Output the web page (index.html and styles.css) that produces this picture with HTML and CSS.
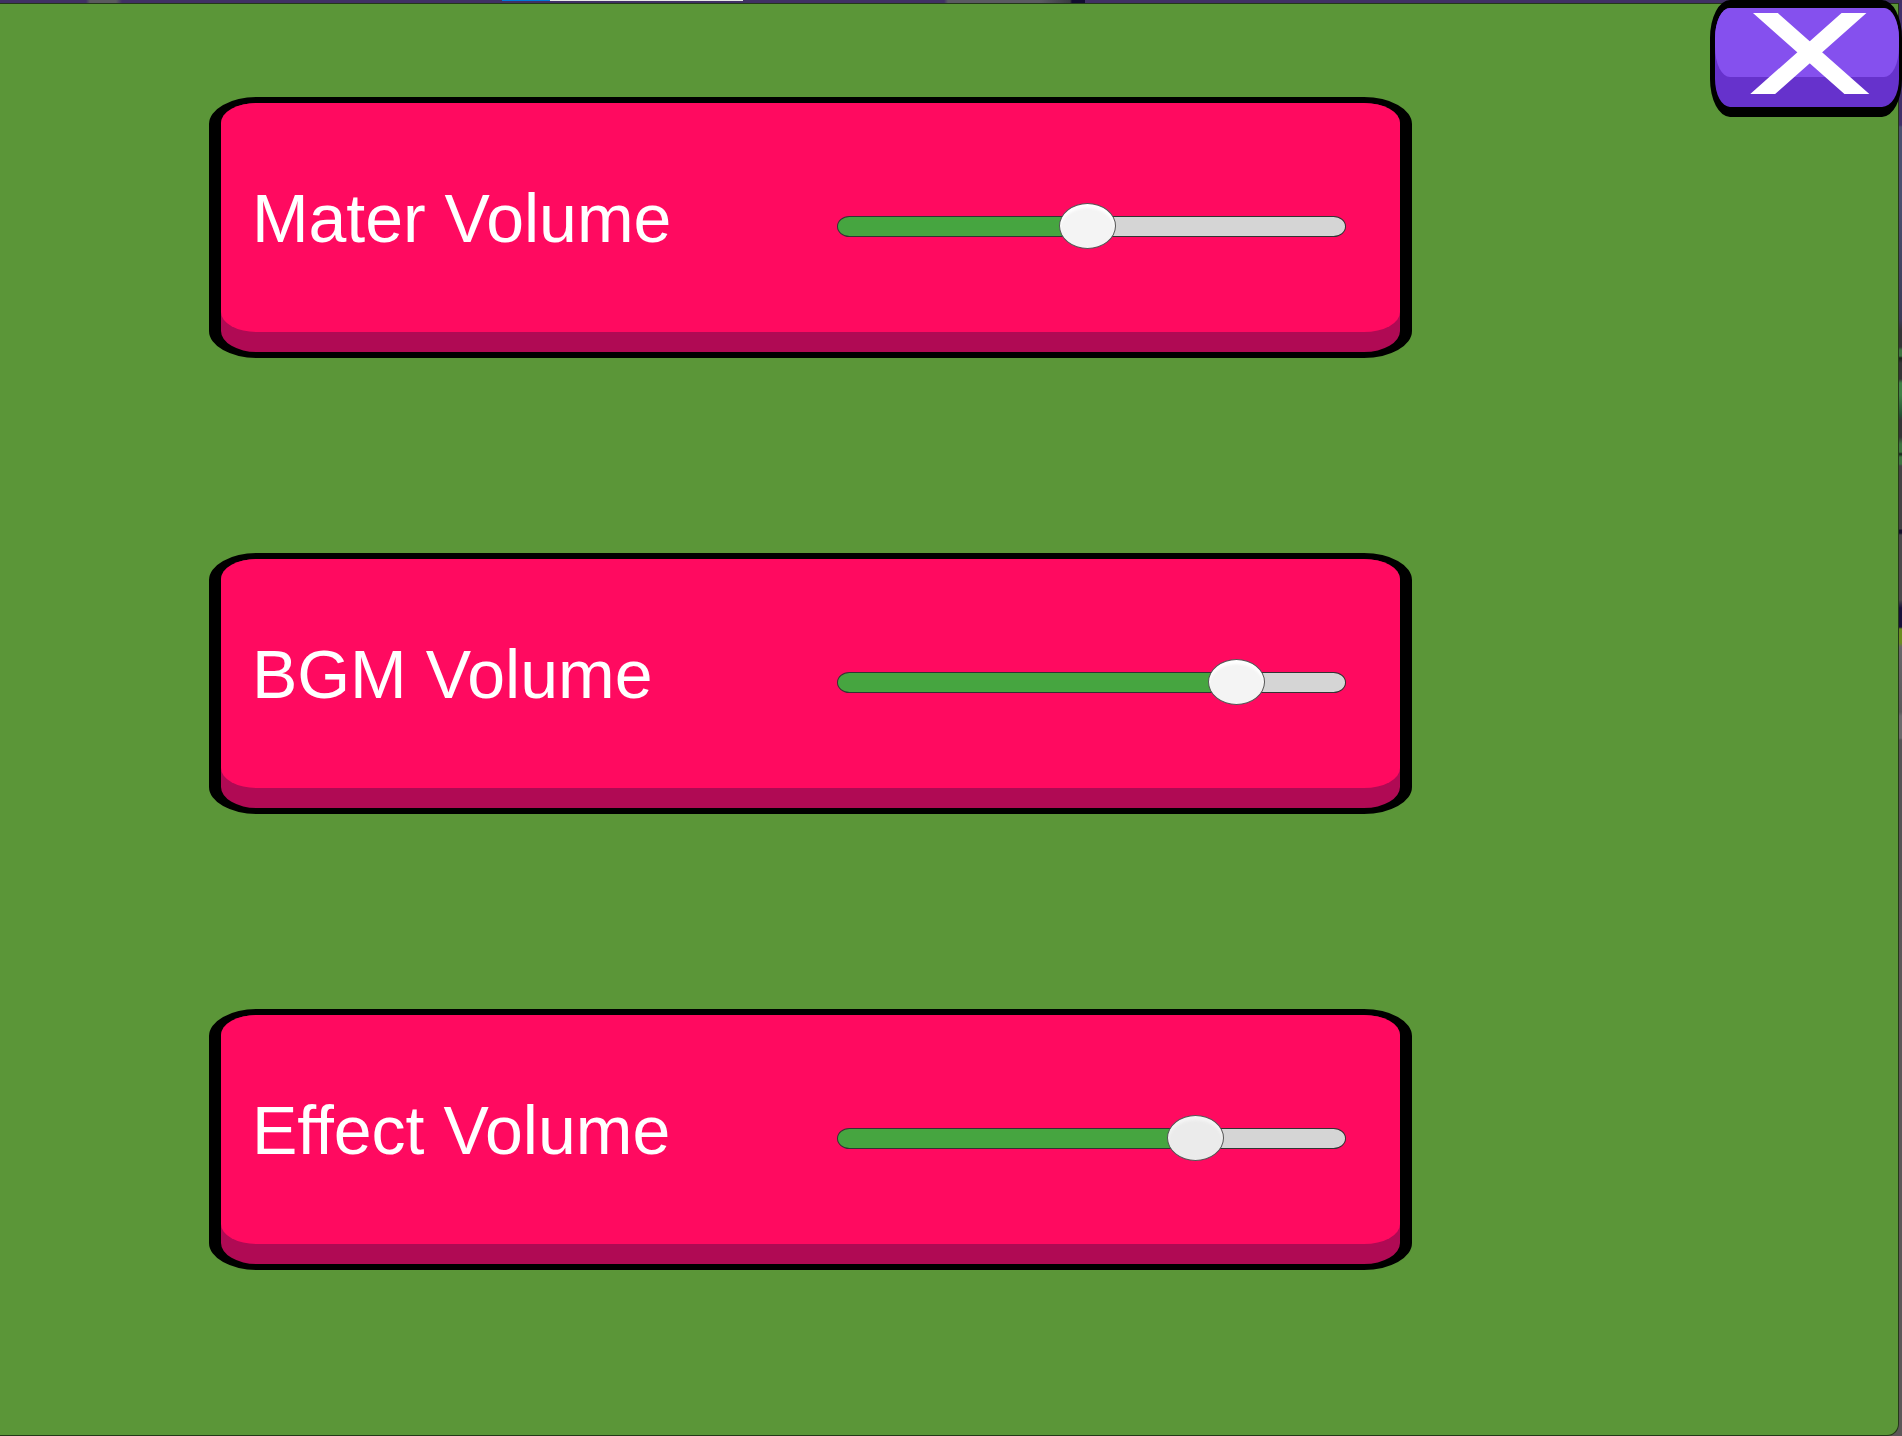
FILE: index.html
```html
<!DOCTYPE html>
<html lang="en">
<head>
  <meta charset="utf-8">
  <meta name="viewport" content="width=device-width, initial-scale=1">
  <title>Volume settings</title>
  <link rel="stylesheet" href="styles.css">
</head>
<body>
  <main class="panel">
    <section class="card">
      <label class="card-label" for="master">Mater Volume</label>
      <input class="slider" id="master" type="range" min="0" max="1000" value="492" style="--value: 0.492">
    </section>
    <section class="card">
      <label class="card-label" for="bgm">BGM Volume</label>
      <input class="slider" id="bgm" type="range" min="0" max="1000" value="823" style="--value: 0.823">
    </section>
    <section class="card">
      <label class="card-label" for="effect">Effect Volume</label>
      <input class="slider slider-active" id="effect" type="range" min="0" max="1000" value="733" style="--value: 0.733">
    </section>
  </main>
  <button class="close" type="button" aria-label="Close">
    <svg class="close-icon" viewBox="0 0 120 81" aria-hidden="true">
      <path d="M4 -10.1 L118.3 91.1 M115.4 -10.1 L1.3 91.1" fill="none" stroke="#fff" stroke-width="16.5"/>
    </svg>
  </button>
</body>
</html>
```

FILE: styles.css
```css
* {
  box-sizing: border-box;
}

/* Slivers of the game scene show above and to the right of the panel. */
body {
  margin: 0;
  min-height: 100vh;
  display: flex;
  padding: 3px 3px 0 0;
  font-family: "Liberation Sans", Arial, sans-serif;
  background-color: #5c5759;
  background-image:
    linear-gradient(90deg, transparent 502px, #0078d7 502px 550px, #e8e8e8 550px 743px, transparent 743px),
    linear-gradient(90deg, #403064 86px, #5a5a5e 90px 116px, #403064 122px 944px, #5a5a62 948px 1040px, #3a3a42 1070px, #120c30 1072px 1085px, #403064 1085px),
    linear-gradient(180deg, #40306a 125px, #4a5070 127px 200px, #3a3b58 320px, #343436 330px 347px, #3c7440 350px 356px, #152018 358px, #343436 363px 379px, #3f8146 383px 395px, #225032 415px, #343436 420px 437px, #3c7440 444px 452px, #152018 454px, #3c7440 457px 464px, #444244 466px 529px, #14102c 530px 533px, #4b494b 535px 600px, #17103a 608px 627px, #6b8c20 629px 643px, #68666a 647px, #5a585a 712px, #6c6a6c 716px 738px, #555355 740px 860px, #5c5759 960px);
  background-size: 100% 1px, 100% 3px, 3px 100%;
  background-position: 0 0, 0 0, 100% 0;
  background-repeat: no-repeat;
}

.panel {
  flex: 1;
  display: flex;
  flex-direction: column;
  gap: 195px;
  padding: 93px 0 93px 11%;
  background: #5b9638;
  border: 1px solid #243818;
  border-left: 0;
  border-bottom-right-radius: 12px;
}

.card {
  width: 71.2%;
  min-height: 261px;
  display: flex;
  align-items: center;
  justify-content: space-between;
  padding: 0 54px 20px 31px;
  border: solid #000;
  border-width: 6px 12px;
  border-radius: 48px / 27px;
  background: #b00a54;
  position: relative;
  z-index: 0;
}

/* Raised face above the darker lower lip. */
.card::before {
  content: "";
  position: absolute;
  z-index: -1;
  inset: 0 0 20px;
  background: #ff0a60;
  border-radius: 36px / 20px;
}

.card-label {
  color: #fff;
  font-size: 68px;
  line-height: 80px;
  white-space: nowrap;
}

.slider {
  --thumb: 57px;
  --fill: calc(var(--thumb) / 2 + (100% - var(--thumb)) * var(--value));
  appearance: none;
  flex: 0 0 509px;
  height: 46px;
  margin: 17px 0 0;
  background: transparent;
  cursor: pointer;
}

.slider::-webkit-slider-runnable-track {
  height: 21px;
  border: 1px solid #333;
  border-radius: 13px / 11px;
  background: linear-gradient(90deg, #46a540 var(--fill), #d5d5d5 var(--fill));
}

.slider::-webkit-slider-thumb {
  appearance: none;
  width: 57px;
  height: 46px;
  margin-top: -14px;
  border: 1px solid #555;
  border-radius: 50%;
  background: #f4f4f4;
  box-shadow: inset 0 4px 3px #fff;
}

.slider-active::-webkit-slider-thumb {
  background: #ebebeb;
  box-shadow: inset 0 4px 3px #f5f5f5;
}

.close {
  position: absolute;
  top: 0;
  right: 0;
  width: 192px;
  height: 117px;
  display: flex;
  justify-content: center;
  align-items: flex-start;
  padding: 5px 0 0 5px;
  border: solid #000;
  border-width: 8px 3px 10px 5px;
  border-radius: 20px / 38px;
  background: #6632cc;
  z-index: 0;
  cursor: pointer;
}

.close::before {
  content: "";
  position: absolute;
  z-index: -1;
  inset: 0 0 30px;
  background: #8550ee;
  border-radius: 15px / 30px;
}

.close-icon {
  width: 120px;
  height: 81px;
  overflow: hidden;
}
```
